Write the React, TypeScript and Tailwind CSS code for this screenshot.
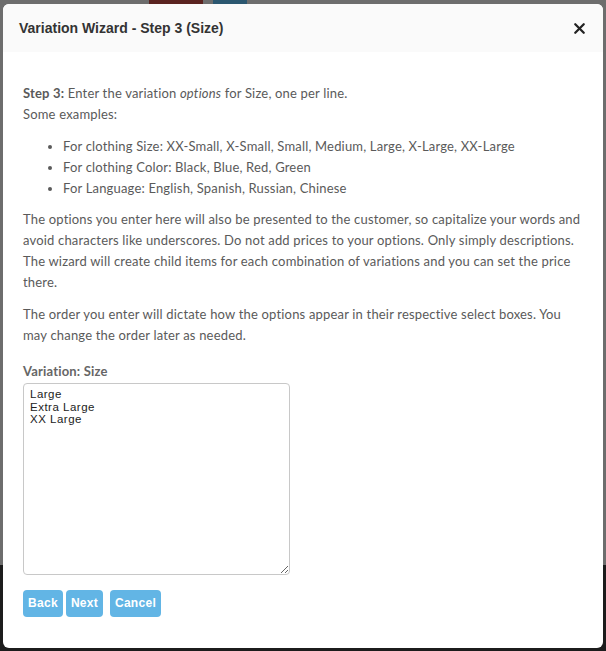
import { X } from 'lucide-react';

const examples = [
  'For clothing Size: XX-Small, X-Small, Small, Medium, Large, X-Large, XX-Large',
  'For clothing Color: Black, Blue, Red, Green',
  'For Language: English, Spanish, Russian, Chinese',
];

const bodyFont = { fontFamily: 'Lato, "Open Sans", sans-serif' };
const uiFont = { fontFamily: '"Liberation Sans", Arial, sans-serif' };

const WizardButton = ({ label, width }: { label: string; width: string }) => (
  <button
    className={`h-[27px] rounded-[4px] bg-[#62b5e5] text-[12px] font-bold tracking-[0.3px] text-white ${width}`}
    style={uiFont}
  >
    {label}
  </button>
);

export default function App() {
  return (
    <div className="relative h-[651px] w-[606px] overflow-hidden bg-[#6d6d6d]">
      {/* page behind the backdrop */}
      <div className="flex h-[565px] flex-col">
        <div className="flex h-[4px] gap-[10px] pl-[149px]">
          <div className="w-[54px] bg-[#5a2320]" />
          <div className="w-[34px] bg-[#2b5770]" />
        </div>
      </div>
      <div className="h-[86px] bg-[#1c1c1c]" />

      {/* dialog */}
      <div className="absolute left-[3px] top-[4px] flex h-[644px] w-[600px] flex-col overflow-hidden rounded-[6px] bg-white">
        <div className="flex h-[48px] items-center justify-between bg-[#fafafa] pl-[16px] pr-[15px]">
          <h2 className="text-[14px] font-bold text-[#333]" style={uiFont}>
            Variation Wizard - Step 3 (Size)
          </h2>
          <X size={17} strokeWidth={3.2} className="text-[#222]" />
        </div>

        <div
          className="px-[20px] pt-[31px] text-[13px] leading-[21px] tracking-[0.18px] text-[#5a5a5a]"
          style={bodyFont}
        >
          <p>
            <b className="font-bold">Step 3:</b> Enter the variation <i>options</i> for Size, one per line.
          </p>
          <p>Some examples:</p>
          <ul className="mt-[11px] list-disc pl-[40px]">
            {examples.map((e) => (
              <li key={e}>{e}</li>
            ))}
          </ul>
          <p className="mt-[10px]">
            The options you enter here will also be presented to the customer, so capitalize your words and
            avoid characters like underscores. Do not add prices to your options. Only simply descriptions.
            The wizard will create child items for each combination of variations and you can set the price
            there.
          </p>
          <p className="mt-[11px]">
            The order you enter will dictate how the options appear in their respective select boxes. You
            may change the order later as needed.
          </p>

          <label className="mt-[15px] block font-bold text-[#666]">Variation: Size</label>
          <textarea
            className="mt-[1px] block h-[192px] w-[267px] resize-y rounded-[4px] border border-[#c8c8c8] px-[6px] py-[4px] text-[11.5px] leading-[12.5px] tracking-[0.5px] text-[#222] outline-none"
            style={uiFont}
            defaultValue={'Large\nExtra Large\nXX Large'}
          />

          <div className="mt-[15px] flex">
            <WizardButton label="Back" width="w-[40px]" />
            <div className="ml-[3px]">
              <WizardButton label="Next" width="w-[37px]" />
            </div>
            <div className="ml-[7px]">
              <WizardButton label="Cancel" width="w-[51px]" />
            </div>
          </div>
        </div>
      </div>
    </div>
  );
}
